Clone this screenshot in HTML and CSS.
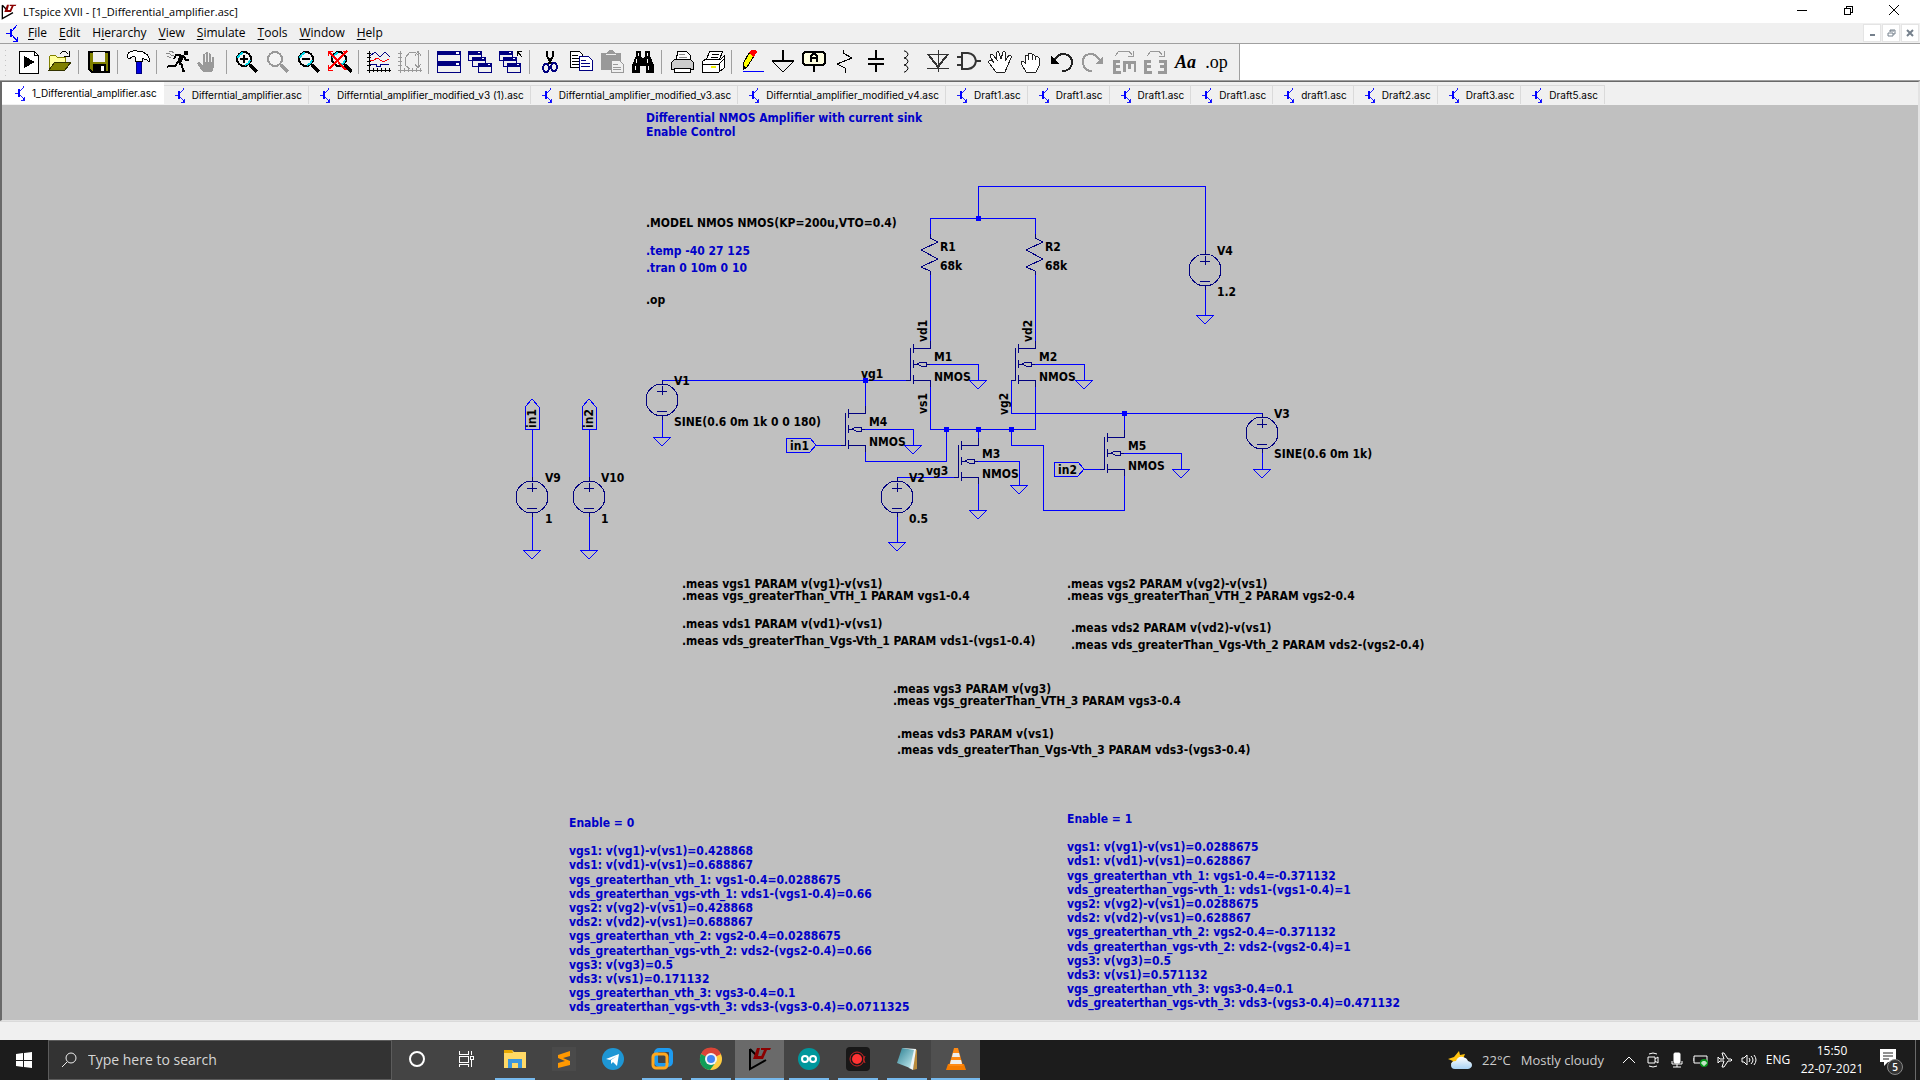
FILE: index.html
```html
<!DOCTYPE html>
<html lang="en">
<head>
<meta charset="utf-8">
<title>LTspice XVII - [1_Differential_amplifier.asc]</title>
<link rel="stylesheet" href="styles.css">
</head>
<body>
<svg class="defs" aria-hidden="true">
  <defs>
    <symbol id="asc" viewBox="0 0 13 18"><path d="M5 5v8" stroke="#00f" stroke-width="2"/><path d="M0 9h5M6 7l5-6M6 11l5 6M11 13v4H7M10 15v2" fill="none" stroke="#00f"/></symbol>
    <symbol id="lt" viewBox="0 0 24 24"><path d="M2 2v20L18 13" fill="none" stroke="#000" stroke-width="2"/><path d="M2 2l7 7" fill="none" stroke="#000" stroke-width="2"/><path d="M9 1h3L10 9h4l-1 3H5zM13 1h10l-1 2h-3l-4 9h-3l4-9h-3z" fill="#8b0000"/></symbol>
    <symbol id="lens" viewBox="0 0 24 24"><path d="M15 15l7 7" stroke-width="3" stroke="currentColor"/><circle cx="9" cy="9" r="7" fill="#f4f4f4" stroke="currentColor" stroke-width="2"/></symbol>
    <symbol id="hand" viewBox="0 0 24 24"><path d="M7 22l-5-7q-2-3 1-3l4 3V5q1-2 2 0V3q2-2 3 0v1q2-2 3 1v2q2-1 3 1v9l-2 5z" fill="currentColor"/><path d="M9 4v8M12 4v8M15 6v6" stroke="#f0f0f0"/></symbol>
    <symbol id="win" viewBox="0 0 14 10"><path d="M0 0h14v10H0z" fill="#000080"/><path d="M1 4h12v5H1z" fill="#f0f0f0"/><path d="M10 1h2v1h-2z" fill="#fff"/></symbol>
    <g id="ground"><path class="wire" d="M-9 0H9L0 9z"/></g>
    <g id="source"><circle class="part" r="16"/><path class="part" d="M-5-9H5M0-14v9M-5 11H5M0-20v4M0 16v4"/></g>
    <g id="nmos"><path class="part" d="M-20-16v32h-4M-17-20v9M-17-4v8M-17 11v9M-17-16H0v-7M-17 16H0v7M0 0h-4M-17 0h4M-13 0l4-2h5v4h-5z"/></g>
    <g id="res"><path class="part" d="M0-20v4l8 4-17 8 17 9-17 8 9 4v4"/></g>
    <path id="node" d="M-2-2h5v5h-5z" fill="#00f"/>
    <linearGradient id="cloud" x2="0" y2="1"><stop stop-color="#fff"/><stop offset="1" stop-color="#a9d3f5"/></linearGradient>
    <linearGradient id="note" x2="1" y2="1"><stop stop-color="#2b7f92"/><stop offset="1" stop-color="#c9f0f4"/></linearGradient>
  </defs>
</svg>

<header class="titlebar">
  <svg class="app-icon" viewBox="0 0 24 24"><use href="#lt"/></svg>
  <h1>LTspice XVII - [1_Differential_amplifier.asc]</h1>
  <div class="window-buttons">
    <button aria-label="Minimize"><svg viewBox="0 0 10 10"><path d="M0 5h10"/></svg></button>
    <button aria-label="Restore"><svg viewBox="0 0 10 10"><path d="M1 3h6v6H1zM3 3V1h6v6H7"/></svg></button>
    <button aria-label="Close"><svg class="smooth" viewBox="0 0 10 10"><path d="M0 0l10 10M10 0L0 10"/></svg></button>
  </div>
</header>

<nav class="menubar" aria-label="Menu">
  <svg class="asc"><use href="#asc"/></svg>
  <button><u>F</u>ile</button><button><u>E</u>dit</button><button>H<u>i</u>erarchy</button><button><u>V</u>iew</button><button><u>S</u>imulate</button><button><u>T</u>ools</button><button><u>W</u>indow</button><button><u>H</u>elp</button>
  <div class="child-buttons">
    <button aria-label="Minimize document"><svg viewBox="0 0 8 8"><path d="M2 6h5"/></svg></button>
    <button aria-label="Restore document"><svg viewBox="0 0 8 8"><path class="thin" d="M1 4h5v3H1zM3 3V1h5v4H6M3 2h4"/></svg></button>
    <button aria-label="Close document"><svg viewBox="0 0 8 8"><path d="M1 1l6 6M7 1L1 7"/></svg></button>
  </div>
</nav>

<div class="toolstrip">
<div class="toolbar" role="toolbar" aria-label="Tools">
  <button aria-label="New schematic"><svg viewBox="0 0 24 24"><path d="M2 1h15l4 4v18H2z" fill="#fff" stroke="#000"/><path d="M17 1v4h4" fill="none" stroke="#000"/><path d="M7 6l11 6-11 6z"/></svg></button>
  <button aria-label="Open"><svg viewBox="0 0 24 24"><path d="M1 20V7l2-2h4l2 2h8v5" fill="#ffff9c" stroke="#808000"/><path d="M1 20l6-8h16l-6 8z" fill="#808000" stroke="#333300"/><path d="M12 4q4-5 8 0M21 1v5h-5" fill="none" stroke="#000"/></svg></button>
  <hr>
  <button aria-label="Save"><svg viewBox="0 0 24 24"><path d="M2 2h20v20H5l-3-3z" fill="#808000" stroke="#000" stroke-width="2"/><path d="M6 2h12v10H6z" fill="#f0f0f0"/><path d="M6 14h13v8H6z"/><path d="M14 16h3v5h-3z" fill="#fff"/></svg></button>
  <hr>
  <button aria-label="Control panel"><svg viewBox="0 0 24 24"><path d="M10 11h5v12h-5z" fill="#0000e0" stroke="#000080"/><path d="M1 5q3-5 10-4h5l4 3q4 2 3 8-2-3-5-3l-2-1v3h-7V7Q5 6 4 9 1 9 1 5z" fill="#fff" stroke="#000"/></svg></button>
  <hr>
  <button aria-label="Run"><svg viewBox="0 0 24 24"><path d="M19 1h4v4h-4zM15 4l5 2-5 8-3-2z"/><path d="M19 7l2 3h3M15 5h-4l-2 4M14 13l3 2 1 6h2M13 12l-3 4H4l-2 1" stroke="#000" stroke-width="2" fill="none"/><path d="M1 3h3l2 2h3M4 1h2l3 2M2 6l4 2" stroke="#888" fill="none"/></svg></button>
  <button aria-label="Halt" class="off"><svg viewBox="0 0 24 24"><use href="#hand"/></svg></button>
  <hr>
  <button aria-label="Zoom in"><svg viewBox="0 0 24 24"><use href="#lens"/><path d="M3 8q1-4 5-5M15 10q-1 4-5 5" stroke="#00d8e8" fill="none" stroke-width="2"/><path d="M5 9h8M9 5v8" stroke="#000" stroke-width="2"/></svg></button>
  <button aria-label="Pan" class="off"><svg viewBox="0 0 24 24"><use href="#lens"/></svg></button>
  <button aria-label="Zoom out"><svg viewBox="0 0 24 24"><use href="#lens"/><path d="M3 8q1-4 5-5M15 10q-1 4-5 5" stroke="#00d8e8" fill="none" stroke-width="2"/><path d="M5 9h8" stroke="#000" stroke-width="2"/></svg></button>
  <button aria-label="Zoom to fit"><svg viewBox="0 0 24 24"><use href="#lens" x="2"/><path d="M5 8q1-4 5-5M17 10q-1 4-5 5" stroke="#00d8e8" fill="none" stroke-width="2"/><path d="M1 2l17 18M19 1L1 19" stroke="#f00" stroke-width="2"/><path d="M0 6V1h5M15 1h5M0 15v5h5" stroke="#f00" fill="none"/></svg></button>
  <hr>
  <button aria-label="Autorange"><svg viewBox="0 0 24 24"><path d="M2 1v22M0 20h24M0 3h4M0 7h4M0 11h4M0 15h4M6 18v4M10 18v4M14 18v4M18 18v4M22 18v4" stroke="#000"/><path d="M3 6l5-4 5 5 5-5 5 5M3 14h6v2h4v-2h9" stroke="#000080" fill="none"/><path d="M3 10h4l3-2 5 3h3l4-2" stroke="#f00" fill="none"/></svg></button>
  <button aria-label="Plot settings" class="off"><svg viewBox="0 0 24 24"><path d="M2 1v22M0 20h24M0 3h4M0 7h4M0 11h4M0 15h4M6 18v4M10 18v4M14 18v4M18 18v4M22 18v4M7 8v7M20 3v15M7 8l5-6h5l3 3M7 15l5 4M17 6l3-5 3 5M17 14l3 4 3-4" stroke="#999" fill="none"/></svg></button>
  <hr>
  <button aria-label="Tile windows"><svg viewBox="0 0 24 24"><path d="M0 1h24v22H0z" fill="#000080"/><path d="M1 5h22v6H1zM1 16h22v6H1z" fill="#f0f0f0"/><path d="M19 2h3v2h-3zM19 13h3v2h-3z" fill="#fff"/></svg></button>
  <button aria-label="Cascade windows"><svg viewBox="0 0 24 24"><use href="#win" width="14" height="10" y="1"/><use href="#win" width="14" height="10" x="4" y="7"/><use href="#win" width="14" height="10" x="10" y="13"/></svg></button>
  <button aria-label="Close windows"><svg viewBox="0 0 24 24"><use href="#win" width="14" height="10" y="1"/><use href="#win" width="14" height="10" x="4" y="7"/><use href="#win" width="14" height="10" x="8" y="13"/><path d="M18 6V1h5M18 1l5 6" fill="none" stroke="#000"/></svg></button>
  <hr>
  <button aria-label="Cut"><svg viewBox="0 0 24 24"><path d="M9 1v5l5 9M15 1v5l-5 9" stroke="#000" fill="none" stroke-width="2"/><ellipse cx="8" cy="18" rx="3" ry="4" fill="none" stroke="#000080" stroke-width="2"/><ellipse cx="16" cy="17" rx="3" ry="4" fill="none" stroke="#000080" stroke-width="2"/></svg></button>
  <button aria-label="Copy"><svg viewBox="0 0 24 24"><path d="M1 1h9l3 3v13H1z" fill="#fff" stroke="#000"/><path d="M3 5h6M3 8h7M3 11h7M3 14h7" stroke="#000"/><path d="M10 6h9l4 4v10H10z" fill="#fff" stroke="#000080"/><path d="M12 10h5M12 13h9M12 16h9" stroke="#000080"/></svg></button>
  <button aria-label="Paste" class="off"><svg viewBox="0 0 24 24"><path d="M1 3h6l2-3h4l2 3h6v17H1z" fill="#999"/><path d="M6 4h10" stroke="#eee"/><path d="M11 10h8l4 4v8H11z" fill="#f0f0f0" stroke="#999"/><path d="M13 14h5M13 17h8M13 19h8" stroke="#999"/></svg></button>
  <button aria-label="Find"><svg viewBox="0 0 24 24"><path d="M5 1h5v5l2 3 2-3V1h5v5l4 9v8h-8v-7h-6v7H1v-8l4-9z"/><path d="M7 3v3M16 3v3M5 9v4M16 9v4M4 16v4M17 16v4" stroke="#fff"/></svg></button>
  <hr>
  <button aria-label="Print setup"><svg viewBox="0 0 24 24"><path d="M6 10L8 1h8l4 4v5" fill="#fff" stroke="#000"/><path d="M1 13l4-4h15l3 3v7H1z" fill="#ccc" stroke="#000"/><path d="M4 18h16v4H4z" fill="#fff" stroke="#000"/><path d="M9 4h6M9 7h8" stroke="#888"/></svg></button>
  <button aria-label="Print"><svg viewBox="0 0 24 24"><path d="M5 10l4-9h13l-4 9" fill="#fff" stroke="#000"/><path d="M1 12l4-3h15l3-3v12l-5 4H1z" fill="#fff" stroke="#000"/><path d="M1 14h17v8M18 14l5-5M11 4h7M10 7h7" fill="none" stroke="#000"/><path d="M10 16h5v2h-5z" fill="#ee0"/></svg></button>
  <hr>
  <button aria-label="Wire"><svg viewBox="0 0 24 24"><path d="M3 14L9 3l5 3-7 11-4 3z" fill="#ff0" stroke="#000"/><path d="M9 3l2-3h4l2 2-3 5z" fill="#f00"/><path d="M3 15l3 2-3 4z"/><path d="M3 21h21" stroke="#00f"/></svg></button>
  <button aria-label="Ground"><svg viewBox="0 0 24 24"><path d="M12 0v11M1 11h22" fill="none" stroke="#000" stroke-width="2"/><path d="M1 11l11 11 11-11" fill="none" stroke="#000"/></svg></button>
  <button aria-label="Label net"><svg viewBox="0 0 24 24"><path d="M3 2h18l2 2v9l-2 2H3l-2-2V4z" fill="#ffffe0" stroke="#000" stroke-width="2"/><path d="M9 12V6l2-2h2l2 2v6M9 8h6M12 15v7" fill="none" stroke="#000" stroke-width="2"/></svg></button>
  <button aria-label="Resistor"><svg viewBox="0 0 24 24"><path d="M10 0v3l9 5L4 14l8 4v5" fill="none" stroke="#000"/></svg></button>
  <button aria-label="Capacitor"><svg viewBox="0 0 24 24"><path d="M12 0v9M12 14v8M4 9h16M4 14h16" stroke="#000" stroke-width="2"/></svg></button>
  <button aria-label="Inductor"><svg class="smooth" viewBox="0 0 24 24"><path d="M9 1h1q6 3 0 7h-1 1q6 3 0 7h-1 1q6 3 0 7H9" fill="none" stroke="#000"/></svg></button>
  <button aria-label="Diode"><svg viewBox="0 0 24 24"><path d="M12 0v22M1 4h22M1 18h22" fill="none" stroke="#333"/><path d="M2 4l10 13L22 4" fill="none" stroke="#333" stroke-width="2"/></svg></button>
  <button aria-label="Component"><svg class="smooth" viewBox="0 0 24 24"><path d="M5 3h6q7 1 8 8-1 7-8 8H5zM0 7h5M0 15h5M19 11h5" fill="none" stroke="#333" stroke-width="2"/></svg></button>
  <button aria-label="Move"><svg viewBox="0 0 24 24"><path d="M8 22l-7-9q-1-3 3-2l2 2-4-7q1-3 3-1l4 5-1-7q2-3 3 0l2 6 2-7q3-1 3 2l-1 7 4-6q3 0 2 3l-4 9-2 5z" fill="#fff" stroke="#222"/></svg></button>
  <button aria-label="Drag"><svg viewBox="0 0 24 24"><path d="M7 22l-4-7q-2-4 1-4l2 2V6q2-2 3 0V4q2-2 4 0v1q2-1 3 1v1q3-1 4 1v8l-3 6z" fill="#fff" stroke="#222"/><path d="M9 5v5M13 5v5M16 6v4" stroke="#222"/></svg></button>
  <button aria-label="Undo"><svg viewBox="0 0 24 24"><path d="M4 11q3-7 10-7 8 1 8 9-1 8-10 8" fill="none" stroke="#222" stroke-width="2"/><path d="M1 6v8h8z"/></svg></button>
  <button aria-label="Redo" class="off"><svg viewBox="0 0 24 24"><path d="M19 11q-3-7-10-7-8 1-7 9 1 8 9 8" fill="none" stroke="#999" stroke-width="2"/><path d="M22 6v8h-8z" fill="#999"/></svg></button>
  <button aria-label="Rotate" class="off"><svg viewBox="0 0 24 24"><path d="M8 11H2v11h7M2 16h6M12 22v-10h11v10M17 12v7" fill="none" stroke="#999" stroke-width="3"/><path d="M3 6l4-5h10l3 4M21 1v5h-5" fill="none" stroke="#999"/></svg></button>
  <button aria-label="Mirror" class="off"><svg viewBox="0 0 24 24"><path d="M8 11H2v11h7M2 16h6M16 11h6v11h-7M22 16h-5" fill="none" stroke="#999" stroke-width="3"/><path d="M4 6l4-5h8l3 4M21 1v5h-5" fill="none" stroke="#999"/></svg></button>
  <button class="aa" aria-label="Text">Aa</button>
  <button class="op" aria-label="SPICE directive">.op</button>
</div>
</div>

<main class="workspace">
<div class="tabs" role="tablist">
  <button role="tab" class="active" aria-selected="true"><svg class="asc"><use href="#asc"/></svg>1_Differential_amplifier.asc</button>
  <button role="tab"><svg class="asc"><use href="#asc"/></svg>Differntial_amplifier.asc</button>
  <button role="tab"><svg class="asc"><use href="#asc"/></svg>Differntial_amplifier_modified_v3 (1).asc</button>
  <button role="tab"><svg class="asc"><use href="#asc"/></svg>Differntial_amplifier_modified_v3.asc</button>
  <button role="tab"><svg class="asc"><use href="#asc"/></svg>Differntial_amplifier_modified_v4.asc</button>
  <button role="tab"><svg class="asc"><use href="#asc"/></svg>Draft1.asc</button>
  <button role="tab"><svg class="asc"><use href="#asc"/></svg>Draft1.asc</button>
  <button role="tab"><svg class="asc"><use href="#asc"/></svg>Draft1.asc</button>
  <button role="tab"><svg class="asc"><use href="#asc"/></svg>Draft1.asc</button>
  <button role="tab"><svg class="asc"><use href="#asc"/></svg>draft1.asc</button>
  <button role="tab"><svg class="asc"><use href="#asc"/></svg>Draft2.asc</button>
  <button role="tab"><svg class="asc"><use href="#asc"/></svg>Draft3.asc</button>
  <button role="tab"><svg class="asc"><use href="#asc"/></svg>Draft5.asc</button>
</div>
<div class="sheet">
<svg class="schematic" viewBox="2 105 1916 914" preserveAspectRatio="xMinYMin meet" role="img" aria-label="Differential NMOS amplifier schematic">
  <g class="wire">
    <path d="M978 218V186H1205V250M930 238V218H1035V238M930 271V341M1035 271V341"/>
    <path d="M662 380H906M865 380V406M930 387V429H1035V387M978 429V438M865 452V461H946V429"/>
    <path d="M1015 380H1011V413H1262M1124 413V430M1011 429V445H1043V510H1124V476"/>
    <path d="M930 364H978V380M1035 364H1084V380M865 429H913V445M978 461H1019V485M1124 453H1181V469"/>
    <path d="M816 445H841M1084 469H1100M897 477H954M978 484V510"/>
    <path d="M532 429V477M589 429V477M532 517V550M589 517V550M662 420V437M897 517V542M1205 290V315M1262 453V469"/>
    <path d="M525 429V407L532 399L539 407V429zM582 429V407L589 399L596 407V429z"/>
    <path d="M786 438H810L816 445L810 452H786zM1054 462H1078L1084 469L1078 476H1054z"/>
  </g>
  <g>
    <use href="#source" x="532" y="497"/><use href="#source" x="589" y="497"/><use href="#source" x="662" y="400"/><use href="#source" x="897" y="497"/><use href="#source" x="1205" y="270"/><use href="#source" x="1262" y="433"/>
    <use href="#nmos" x="930" y="364"/><use href="#nmos" x="1035" y="364"/><use href="#nmos" x="865" y="429"/><use href="#nmos" x="978" y="461"/><use href="#nmos" x="1124" y="453"/>
    <use href="#res" x="930" y="254"/><use href="#res" x="1035" y="254"/>
    <use href="#ground" x="532" y="550"/><use href="#ground" x="589" y="550"/><use href="#ground" x="662" y="437"/><use href="#ground" x="897" y="542"/><use href="#ground" x="1205" y="315"/><use href="#ground" x="1262" y="469"/>
    <use href="#ground" x="978" y="380"/><use href="#ground" x="1084" y="380"/><use href="#ground" x="913" y="445"/><use href="#ground" x="1019" y="485"/><use href="#ground" x="1181" y="469"/><use href="#ground" x="978" y="510"/>
    <use href="#node" x="978" y="218"/><use href="#node" x="865" y="380"/><use href="#node" x="946" y="429"/><use href="#node" x="978" y="429"/><use href="#node" x="1011" y="429"/><use href="#node" x="1124" y="413"/>
  </g>
  <g class="label">
    <text x="646" y="227">.MODEL NMOS NMOS(KP=200u,VTO=0.4)</text>
    <text x="646" y="304">.op</text>
    <text x="940" y="251">R1</text><text x="940" y="270">68k</text>
    <text x="1045" y="251">R2</text><text x="1045" y="270">68k</text>
    <text x="1217" y="255">V4</text><text x="1217" y="296">1.2</text>
    <text x="934" y="361">M1</text><text x="934" y="381">NMOS</text>
    <text x="1039" y="361">M2</text><text x="1039" y="381">NMOS</text>
    <text x="869" y="426">M4</text><text x="869" y="446">NMOS</text>
    <text x="982" y="458">M3</text><text x="982" y="478">NMOS</text>
    <text x="1128" y="450">M5</text><text x="1128" y="470">NMOS</text>
    <text x="861" y="378">vg1</text><text x="926" y="475">vg3</text>
    <text x="674" y="385">V1</text><text x="674" y="426">SINE(0.6 0m 1k 0 0 180)</text>
    <text x="1274" y="418">V3</text><text x="1274" y="458">SINE(0.6 0m 1k)</text>
    <text x="545" y="482">V9</text><text x="545" y="523">1</text>
    <text x="601" y="482">V10</text><text x="601" y="523">1</text>
    <text x="909" y="482">V2</text><text x="909" y="523">0.5</text>
    <text x="790" y="450">in1</text><text x="1058" y="474">in2</text>
    <text transform="translate(927 342) rotate(-90)">vd1</text>
    <text transform="translate(1032 342) rotate(-90)">vd2</text>
    <text transform="translate(927 414) rotate(-90)">vs1</text>
    <text transform="translate(1008 415) rotate(-90)">vg2</text>
    <text transform="translate(536 428) rotate(-90)">in1</text>
    <text transform="translate(593 428) rotate(-90)">in2</text>
    <text x="682" y="588">.meas vgs1 PARAM v(vg1)-v(vs1)</text>
    <text x="682" y="600">.meas vgs_greaterThan_VTH_1 PARAM vgs1-0.4</text>
    <text x="682" y="628">.meas vds1 PARAM v(vd1)-v(vs1)</text>
    <text x="682" y="645">.meas vds_greaterThan_Vgs-Vth_1 PARAM vds1-(vgs1-0.4)</text>
    <text x="1067" y="588">.meas vgs2 PARAM v(vg2)-v(vs1)</text>
    <text x="1067" y="600">.meas vgs_greaterThan_VTH_2 PARAM vgs2-0.4</text>
    <text x="1071" y="632">.meas vds2 PARAM v(vd2)-v(vs1)</text>
    <text x="1071" y="649">.meas vds_greaterThan_Vgs-Vth_2 PARAM vds2-(vgs2-0.4)</text>
    <text x="893" y="693">.meas vgs3 PARAM v(vg3)</text>
    <text x="893" y="705">.meas vgs_greaterThan_VTH_3 PARAM vgs3-0.4</text>
    <text x="897" y="738">.meas vds3 PARAM v(vs1)</text>
    <text x="897" y="754">.meas vds_greaterThan_Vgs-Vth_3 PARAM vds3-(vgs3-0.4)</text>
  </g>
  <g class="label comment">
    <text x="646" y="122">Differential NMOS Amplifier with current sink</text>
    <text x="646" y="136">Enable Control</text>
    <text x="646" y="255">.temp -40 27 125</text>
    <text x="646" y="272">.tran 0 10m 0 10</text>
    <text x="569" y="827">Enable = 0</text>
    <text x="569" y="855">vgs1: v(vg1)-v(vs1)=0.428868</text>
    <text x="569" y="869">vds1: v(vd1)-v(vs1)=0.688867</text>
    <text x="569" y="884">vgs_greaterthan_vth_1: vgs1-0.4=0.0288675</text>
    <text x="569" y="898">vds_greaterthan_vgs-vth_1: vds1-(vgs1-0.4)=0.66</text>
    <text x="569" y="912">vgs2: v(vg2)-v(vs1)=0.428868</text>
    <text x="569" y="926">vds2: v(vd2)-v(vs1)=0.688867</text>
    <text x="569" y="940">vgs_greaterthan_vth_2: vgs2-0.4=0.0288675</text>
    <text x="569" y="955">vds_greaterthan_vgs-vth_2: vds2-(vgs2-0.4)=0.66</text>
    <text x="569" y="969">vgs3: v(vg3)=0.5</text>
    <text x="569" y="983">vds3: v(vs1)=0.171132</text>
    <text x="569" y="997">vgs_greaterthan_vth_3: vgs3-0.4=0.1</text>
    <text x="569" y="1011">vds_greaterthan_vgs-vth_3: vds3-(vgs3-0.4)=0.0711325</text>
    <text x="1067" y="823">Enable = 1</text>
    <text x="1067" y="851">vgs1: v(vg1)-v(vs1)=0.0288675</text>
    <text x="1067" y="865">vds1: v(vd1)-v(vs1)=0.628867</text>
    <text x="1067" y="880">vgs_greaterthan_vth_1: vgs1-0.4=-0.371132</text>
    <text x="1067" y="894">vds_greaterthan_vgs-vth_1: vds1-(vgs1-0.4)=1</text>
    <text x="1067" y="908">vgs2: v(vg2)-v(vs1)=0.0288675</text>
    <text x="1067" y="922">vds2: v(vd2)-v(vs1)=0.628867</text>
    <text x="1067" y="936">vgs_greaterthan_vth_2: vgs2-0.4=-0.371132</text>
    <text x="1067" y="951">vds_greaterthan_vgs-vth_2: vds2-(vgs2-0.4)=1</text>
    <text x="1067" y="965">vgs3: v(vg3)=0.5</text>
    <text x="1067" y="979">vds3: v(vs1)=0.571132</text>
    <text x="1067" y="993">vgs_greaterthan_vth_3: vgs3-0.4=0.1</text>
    <text x="1067" y="1007">vds_greaterthan_vgs-vth_3: vds3-(vgs3-0.4)=0.471132</text>
  </g>
</svg>
</div>
</main>
<div class="statusbar"></div>

<footer class="taskbar">
  <button class="start" aria-label="Start"><svg viewBox="0 0 16 16"><path d="M0 2l7-1v7H0zM8 1l8-1v8H8zM0 9h7v6l-7-1zM8 9h8v7l-8-1z" fill="#fff"/></svg></button>
  <label class="search">
    <svg viewBox="0 0 16 16"><circle cx="10" cy="6" r="5" fill="none" stroke="#eee"/><path d="M6 10l-5 5" stroke="#eee"/></svg>
    <input type="text" placeholder="Type here to search" aria-label="Search">
  </label>
  <div class="apps">
    <button aria-label="Cortana"><svg viewBox="0 0 24 24"><circle cx="12" cy="12" r="7" fill="none" stroke="#fff" stroke-width="2"/></svg></button>
    <button aria-label="Task View"><svg class="crisp" viewBox="0 0 24 24"><path d="M5 4v3h9V4M5 20v-3h9v3M5 9h9v6H5zM17 4v4M17 12v8M16 9h3v3h-3z" fill="none" stroke="#fff"/></svg></button>
    <button aria-label="File Explorer" class="open"><svg viewBox="0 0 24 24"><path d="M1 3h8l2 2h12v16H1z" fill="#ffd966"/><path d="M1 3h8l1 3H1z" fill="#e8a800"/><path d="M5 21v-9h14v9h-4v-5H9v5z" fill="#3c96dc"/></svg></button>
    <button aria-label="Sublime Text"><svg viewBox="0 0 24 24"><path d="M0 0h24v24H0z" fill="#4a4a4a"/><path d="M18 4v5l-7 2 7 3v4L6 21v-5l7-2-7-3V8z" fill="#ff9800"/></svg></button>
    <button aria-label="Telegram"><svg viewBox="0 0 24 24"><circle cx="12" cy="12" r="11" fill="#1e96d4"/><path d="M5 12l13-5-2 12-4-4-2 2v-4l6-4-7 4z" fill="#fff"/></svg></button>
    <button aria-label="VMware" class="open"><svg viewBox="0 0 24 24"><rect x="6" y="3" width="15" height="15" rx="3" fill="none" stroke="#1e9bf0" stroke-width="4"/><rect x="3" y="7" width="14" height="14" rx="3" fill="none" stroke="#ffa81e" stroke-width="3"/></svg></button>
    <button aria-label="Chrome" class="open"><svg viewBox="0 0 24 24"><circle cx="12" cy="12" r="11" fill="#ffcd40"/><path d="M12 12L2 7a11 11 0 0 1 20 0z" fill="#db4437"/><path d="M12 12L2 7a11 11 0 0 0 9 16l6-8z" fill="#0f9d58"/><circle cx="12" cy="12" r="6" fill="#f4f4f4"/><circle cx="12" cy="12" r="4" fill="#4285f4"/></svg></button>
    <button aria-label="LTspice" class="open current"><svg viewBox="0 0 24 24"><use href="#lt"/></svg></button>
    <button aria-label="Arduino" class="open"><svg viewBox="0 0 24 24"><circle cx="12" cy="12" r="11" fill="#00979c"/><circle cx="8" cy="12" r="3" fill="none" stroke="#fff" stroke-width="2"/><circle cx="16" cy="12" r="3" fill="none" stroke="#fff" stroke-width="2"/></svg></button>
    <button aria-label="Recorder" class="open"><svg viewBox="0 0 24 24"><rect width="24" height="24" rx="4" fill="#181818"/><circle cx="11" cy="12" r="7" fill="none" stroke="#c22"/><circle cx="11" cy="12" r="5" fill="#f33"/><path d="M19 9q-3 3 0 7" fill="none" stroke="#c22"/></svg></button>
    <button aria-label="Notepad" class="open"><svg viewBox="0 0 24 24"><path d="M20 2l2 1v19l-4 1z" fill="#b98a3a"/><path d="M7 1l14 1-3 21-4-2z" fill="#eef5f6"/><path d="M7 1l12 2-4 18-13-5z" fill="url(#note)"/></svg></button>
    <button aria-label="VLC" class="open hot"><svg viewBox="0 0 24 24"><path d="M4 17h16l2 6H2z" fill="#f57c00"/><path d="M10 1h4l5 18H5z" fill="#ff8a14"/><path d="M9 6h6l1 4H8zM7 13h10l1 4H6z" fill="#eee"/></svg></button>
  </div>
  <div class="tray">
    <div class="weather"><svg viewBox="0 0 24 20"><path d="M11 1l1 4 5-1-2 5-6 6-6-1 2-3-5-2 6-2z" fill="#ffc20e"/><path d="M7 19q-4 0-4-4t5-4q2-5 7-4 4 1 5 4 4 1 4 4t-4 4z" fill="url(#cloud)"/></svg><span>22°C</span><span>Mostly cloudy</span></div>
    <button aria-label="Hidden icons"><svg viewBox="0 0 16 16"><path d="M2 11l6-6 6 6"/></svg></button>
    <button aria-label="Meet now"><svg viewBox="0 0 16 16"><path d="M3 5h7v6H3zM10 7l3-2v6l-3-2M4 2q4-2 8 0M4 14q4 2 8 0"/></svg></button>
    <button aria-label="Microphone"><svg viewBox="0 0 16 16"><rect x="5" y="1" width="6" height="10" rx="1" fill="#fff"/><path d="M3 9v3h10V9M8 12v3M4 15h8"/></svg></button>
    <button aria-label="Battery"><svg viewBox="0 0 16 16"><path d="M1 4h13v7H1zM0 6v3"/><circle cx="11" cy="11" r="4" fill="#0a9a1e" stroke="none"/><path d="M11 9v5M9 10h4v2H9z"/></svg></button>
    <button aria-label="Airplane mode"><svg viewBox="0 0 16 16"><path d="M1 5l2 2h4L5 1h2l4 6h3q2 1 0 2h-3l-4 6H5l2-6H3l-2 2z"/></svg></button>
    <button aria-label="Volume"><svg viewBox="0 0 16 16"><path d="M1 6h2l3-3v10l-3-3H1zM8 6q2 2 0 4M10 4q4 4 0 8M13 3q4 5 0 10"/></svg></button>
    <span class="lang">ENG</span>
    <div class="clock"><time>15:50</time><time>22-07-2021</time></div>
    <button class="notify" aria-label="Notifications"><svg viewBox="0 0 26 26"><path d="M1 2h16v13H9l-4 4v-4H1z" fill="#fff" stroke="none"/><path d="M4 6h10M4 9h10M4 12h6" stroke="#222"/></svg><b>5</b></button>
    <span class="peek"></span>
  </div>
</footer>
</body>
</html>
```
FILE: styles.css
```css
* { box-sizing: border-box; }
body {
  margin: 0;
  height: 100vh;
  display: flex;
  flex-direction: column;
  overflow: hidden;
  background: #f0f0f0;
  color: #000;
  font: 12px/16px "Open Sans", "Noto Sans", sans-serif;
}
button { margin: 0; padding: 0; border: 0; background: none; color: inherit; font: inherit; }
.defs { position: absolute; width: 0; height: 0; }

.titlebar { flex: none; height: 23px; display: flex; align-items: center; background: #fff; padding-left: 1px; gap: 6px; }
.titlebar h1 { margin: 0; font-size: 11px; font-weight: 400; }
.app-icon { width: 16px; height: 18px; }
.window-buttons { margin-left: auto; display: flex; align-self: stretch; padding: 0 3px 3px 0; }
.window-buttons button { width: 46px; display: grid; place-items: center; }
.window-buttons svg { width: 10px; height: 10px; fill: none; stroke: #000; shape-rendering: crispEdges; overflow: visible; }
svg.smooth { shape-rendering: auto; }

.menubar { flex: none; height: 21px; display: flex; align-items: center; padding-left: 6px; border-bottom: 1px solid #a0a0a0; }
.menubar > .asc { margin-right: 3px; }
.menubar > button { padding: 0 6px; }
.menubar u { text-underline-offset: 2px; }
.asc { width: 13px; height: 18px; flex: none; shape-rendering: crispEdges; }
.child-buttons { margin-left: auto; display: flex; gap: 1px; padding-right: 1px; }
.child-buttons button { width: 18px; height: 18px; background: #fff; border: 1px solid #e4e4e4; display: grid; place-items: center; }
.child-buttons svg { width: 8px; height: 8px; fill: none; stroke: #75808c; stroke-width: 2; overflow: visible; }
.child-buttons .thin { stroke-width: 1; }

.toolstrip { flex: none; height: 37px; background: #fff; border-bottom: 1px solid #a0a0a0; display: flex; }
.toolbar { display: flex; align-items: center; padding: 0 7px 0 4px; background: #f0f0f0; border-right: 1px solid #a0a0a0; }
.toolbar::before { content: ""; width: 9px; height: 28px; background: radial-gradient(circle, #c4c4c4 1px, transparent 1px) 0 0 / 3px 5px repeat-y; }
.toolbar button { width: 31px; height: 30px; display: grid; place-items: center; }
.toolbar svg { width: 24px; height: 24px; shape-rendering: crispEdges; }
.toolbar svg.smooth { shape-rendering: auto; }
.toolbar hr { width: 8px; height: 24px; margin: 0; border: 0; background: linear-gradient(#a0a0a0, #a0a0a0) 3px 0 / 1px 100% no-repeat; }
.toolbar .off { color: #999; }
.toolbar .aa { font: italic 700 18px/24px "Liberation Serif", serif; }
.toolbar .op { font: 400 18px/24px "Liberation Serif", serif; }

.workspace { flex: 1; min-height: 0; display: flex; flex-direction: column; border: 1px solid #696969; border-right-color: #e3e3e3; border-bottom-color: #e3e3e3; border-left-width: 2px; border-right-width: 2px; }
.tabs { flex: none; height: 23px; display: flex; align-items: flex-end; padding-bottom: 1px; }
.tabs button { display: flex; align-items: center; gap: 5px; height: 19px; padding: 0 6px 0 10px; border: solid #dadada; border-width: 1px 1px 0 0; font: 10px/14px Inter, Arial, sans-serif; white-space: nowrap; }
.tabs .asc { height: 16px; }
.tabs .active { height: 22px; background: #fff; border-color: #fff; padding: 0 6px 1px 12px; }
.sheet { flex: 1; min-height: 0; background: #c0c0c0; overflow: hidden; }
.schematic { display: block; width: 100%; height: 100%; }
.wire { fill: none; stroke: #0000ff; shape-rendering: crispEdges; }
.part { fill: none; stroke: #000080; shape-rendering: crispEdges; }
.label { font: 700 12px "DejaVu Sans Condensed", "DejaVu Sans", sans-serif; fill: #000; }
.comment { fill: #0000c8; }
.statusbar { flex: none; height: 19px; border-top: 1px solid #dadada; }

.taskbar { flex: none; height: 40px; display: flex; align-items: stretch; background: #1c1c1c; color: #fff; }
.taskbar button { display: grid; place-items: center; }
.start { width: 48px; }
.start svg { width: 16px; height: 16px; }
.search { width: 344px; display: flex; align-items: center; gap: 11px; padding-left: 12px; background: #333; border: 1px solid #5c5c5c; }
.search svg { width: 16px; height: 16px; }
.search input { flex: 1; min-width: 0; padding: 0; border: 0; background: none; color: #ddd; font: 14px/20px "Open Sans", sans-serif; }
.search input::placeholder { color: #d6d6d6; opacity: 1; }
.apps { display: flex; background: #444; }
.apps button { width: 49px; border-bottom: 2px solid transparent; }
.apps svg { width: 24px; height: 24px; }
.apps .crisp { shape-rendering: crispEdges; }
.apps .open { background: linear-gradient(#76b9ed, #76b9ed) bottom / 40px 2px no-repeat border-box; }
.apps .current { background-color: #6a6a6a; background-size: 100% 2px; }
.apps .hot { background-color: #505050; background-size: 100% 2px; }
.tray { margin-left: auto; display: flex; align-items: center; }
.weather { display: flex; align-items: center; gap: 10px; margin-right: 13px; font-size: 13px; color: #ccc; }
.weather svg { width: 24px; height: 20px; }
.tray > button { width: 24px; }
.tray > button svg { width: 16px; height: 16px; fill: none; stroke: #fff; }
.lang { width: 34px; text-align: center; }
.clock { width: 74px; display: flex; flex-direction: column; align-items: center; line-height: 18px; }
.tray > .notify { width: 46px; position: relative; }
.tray > .notify svg { width: 26px; height: 26px; }
.notify b { position: absolute; left: 18px; top: 12px; width: 16px; height: 16px; border: 1px solid #888; border-radius: 50%; background: #333; font: 600 10px/14px "Open Sans", sans-serif; text-align: center; }
.peek { width: 5px; align-self: stretch; border-left: 1px solid #6a6a6a; }
```
